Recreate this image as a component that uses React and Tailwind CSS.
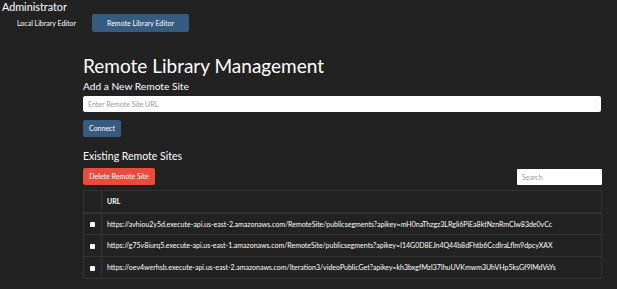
import React from 'react';

const sites = [
  'https://avhiou2y5d.execute-api.us-east-2.amazonaws.com/RemoteSite/publicsegments?apikey=mH0naThzgz3LRgli6PiEa8ktNznRmClw83de0vCc',
  'https://g75v8iurq5.execute-api.us-east-1.amazonaws.com/RemoteSite/publicsegments?apikey=I14G0D8EJn4Q44b8dFhtb6CcdIraLflm9dpcyXAX',
  'https://oev4werhsb.execute-api.us-east-2.amazonaws.com/Iteration3/videoPublicGet?apikey=kh3bxgfMzl37IhuUVKmwm3UhVHp5ksGf9lMdVsYs',
];

export default function App() {
  return (
    <div className="w-full h-[289px] overflow-hidden bg-[#222222] text-white font-['Lato','Noto_Sans',sans-serif]">
      {/* top bar */}
      <div className="pl-[2px] text-[10.8px] leading-[13px]">Administrator</div>
      <div className="flex items-center mt-[1px] h-[18px]">
        <span className="pl-[17px] w-[92px] text-[7px]">Local Library Editor</span>
        <button className="w-[97px] h-[18px] bg-[#375a7f] rounded-[2px] text-[7px] text-white">
          Remote Library Editor
        </button>
      </div>

      {/* main */}
      <div className="ml-[83px] w-[519px]">
        <h1 className="mt-[21px] text-[19px] leading-[25px]">Remote Library Management</h1>
        <h2 className="mt-[1px] text-[10.2px] leading-[14px]">Add a New Remote Site</h2>
        <input
          className="mt-[3px] block w-[518px] h-[16px] bg-white rounded-[2px] px-[5px] text-[7px] text-black placeholder:text-[#999] outline-none"
          placeholder="Enter Remote Site URL"
        />
        <button className="mt-[8px] block w-[38px] h-[17px] bg-[#375a7f] rounded-[2px] text-[7px] text-white">
          Connect
        </button>
        <h2 className="mt-[12px] text-[10.5px] leading-[14px]">Existing Remote Sites</h2>
        <div className="mt-[5px] flex items-center justify-between">
          <button className="w-[72px] h-[17px] bg-[#e74c3c] rounded-[2px] text-[7px] text-white">
            Delete Remote Site
          </button>
          <input
            className="w-[85px] h-[16px] bg-white rounded-[1px] px-[5px] text-[7px] text-black placeholder:text-[#999] outline-none"
            placeholder="Search"
          />
        </div>
        <table className="mt-[5px] w-[519px] border-collapse border border-[#333] text-[7px]">
          <thead>
            <tr className="h-[22px] border-b-2 border-[#333]">
              <th className="w-[18px] border-r border-[#333]"></th>
              <th className="text-left pl-[5px] font-bold">URL</th>
            </tr>
          </thead>
          <tbody>
            {sites.map((s) => (
              <tr key={s} className="h-[22px] border-t border-[#333]">
                <td className="border-r border-[#333] text-center">
                  <span className="inline-block w-[5px] h-[5px] bg-white rounded-[1px] align-middle"></span>
                </td>
                <td className="pl-[5px] whitespace-nowrap">{s}</td>
              </tr>
            ))}
          </tbody>
        </table>
      </div>
    </div>
  );
}
